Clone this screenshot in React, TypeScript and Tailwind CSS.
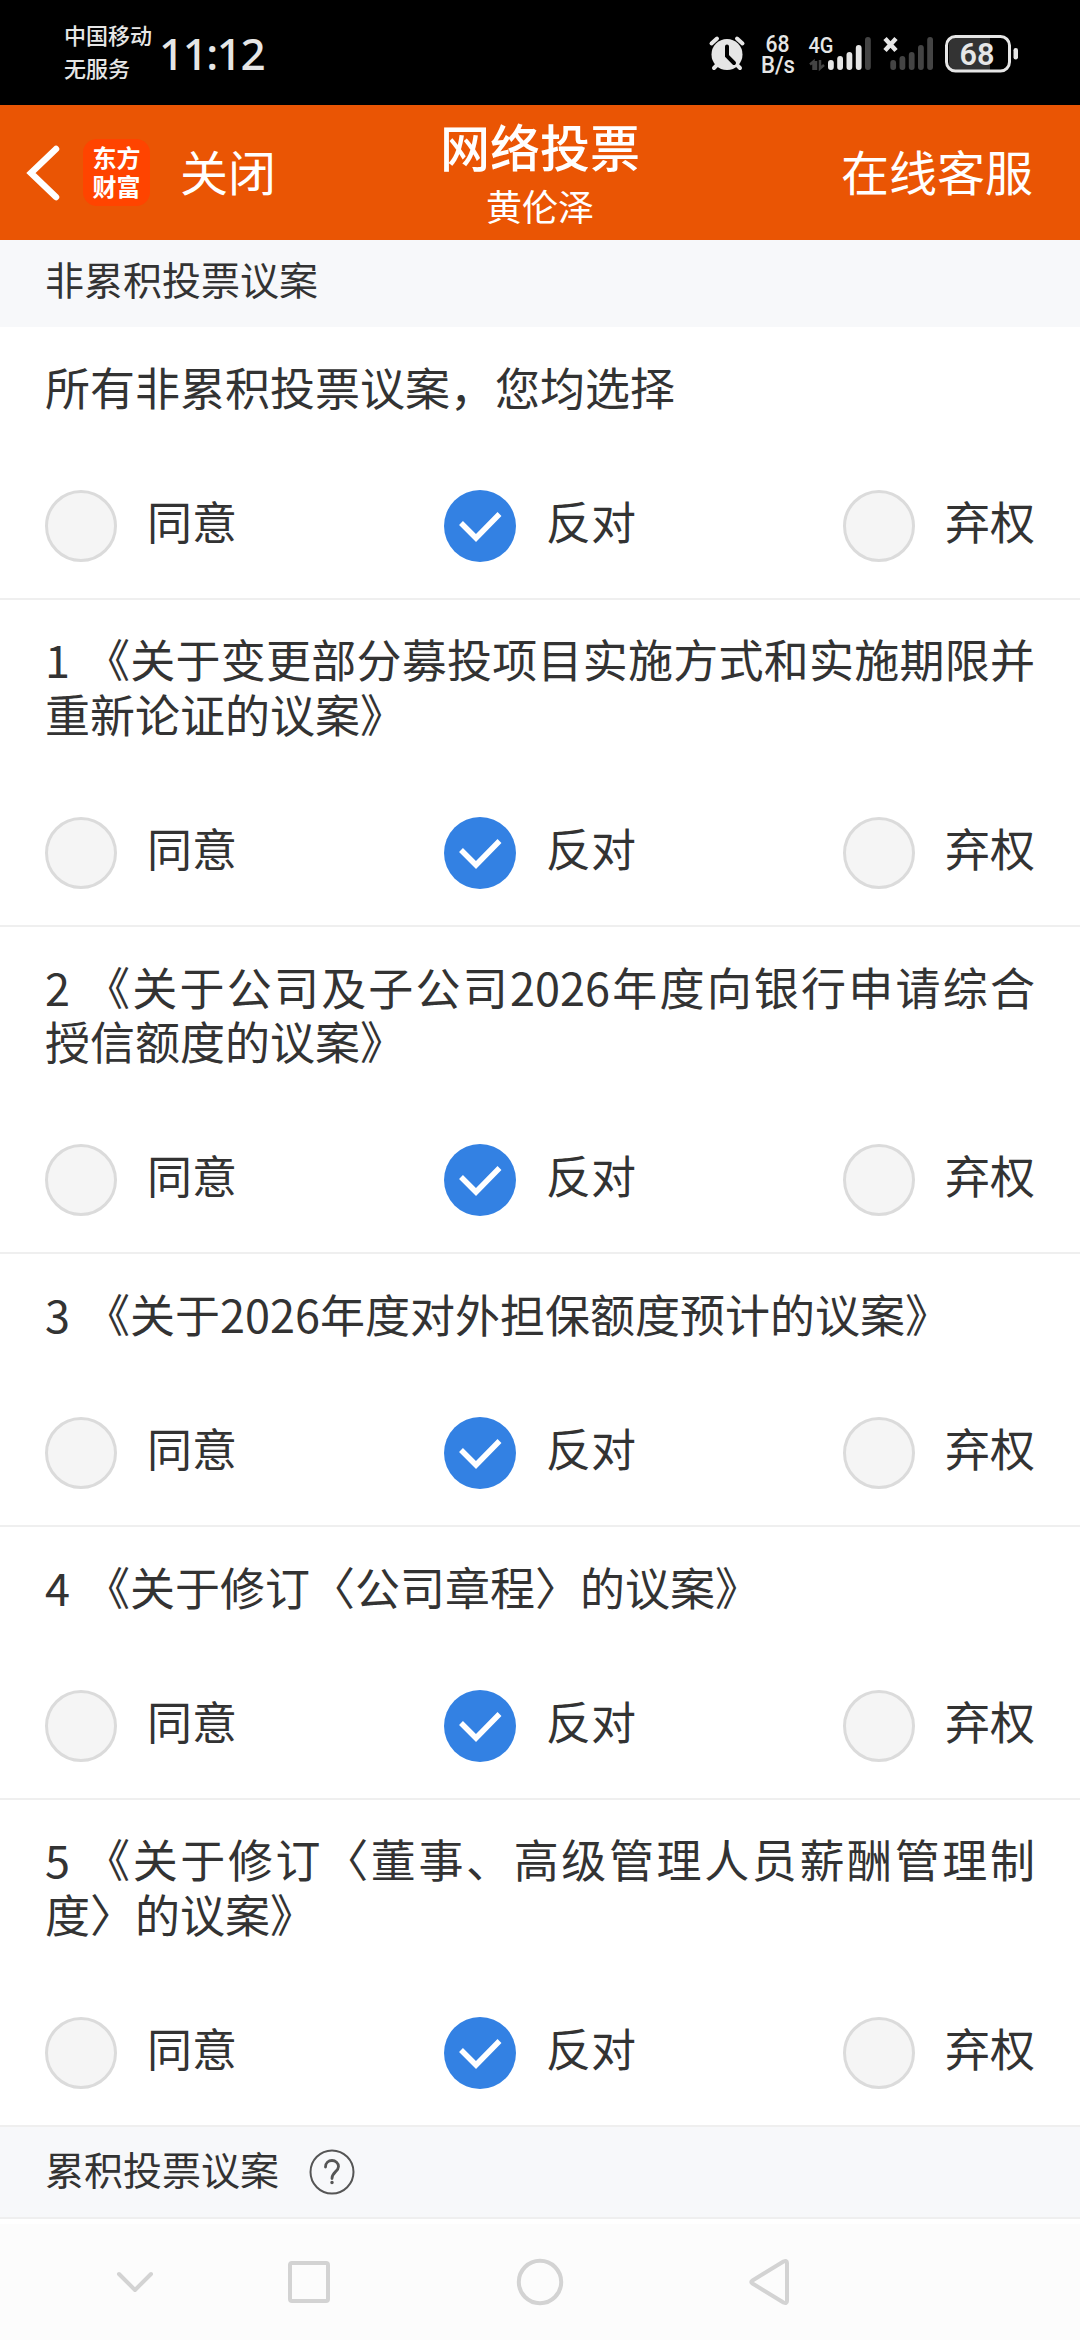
import { useState } from 'react';
import clsx from 'clsx';

type Choice = 'agree' | 'against' | 'abstain';

interface Proposal {
  id: string;
  no?: string;
  lines: string[];
}

const CHOICES: { value: Choice; label: string }[] = [
  { value: 'agree', label: '同意' },
  { value: 'against', label: '反对' },
  { value: 'abstain', label: '弃权' },
];

const PROPOSALS: Proposal[] = [
  { id: 'all', lines: ['所有非累积投票议案，您均选择'] },
  { id: 'p1', no: '1', lines: ['《关于变更部分募投项目实施方式和实施期限并', '重新论证的议案》'] },
  { id: 'p2', no: '2', lines: ['《关于公司及子公司2026年度向银行申请综合', '授信额度的议案》'] },
  { id: 'p3', no: '3', lines: ['《关于2026年度对外担保额度预计的议案》'] },
  { id: 'p4', no: '4', lines: ['《关于修订〈公司章程〉的议案》'] },
  { id: 'p5', no: '5', lines: ['《关于修订〈董事、高级管理人员薪酬管理制', '度〉的议案》'] },
];

function StatusBar() {
  return (
    <div className="flex h-[105px] items-start bg-black pl-[64px] text-[#e6e6e6]">
      <div className="w-[95px] pt-[18px] text-[22px] leading-[33px] font-medium whitespace-nowrap">
        <div>中国移动</div>
        <div>无服务</div>
      </div>
      <div className="pt-[23px] font-['Noto_Sans'] text-[44px] leading-[60px] font-medium tracking-[-1.500px] whitespace-nowrap">
        11:12
      </div>
      <svg className="ml-auto h-[105px] w-[380px] shrink-0" viewBox="700 0 380 105" fill="#e6e6e6">
        {/* alarm */}
        <circle cx="727" cy="54.5" r="15.5" />
        <path
          d="M711.500 43.500l5.500-5M742.500 43.500l-5.500-5M714 68l5-5M740 68l-5-5"
          stroke="#e6e6e6"
          strokeWidth="4"
          strokeLinecap="round"
        />
        <path d="M727 46.500v9.500l7 7" fill="none" stroke="#000" strokeWidth="4" strokeLinecap="round" />

        <g fontFamily="Roboto" fontWeight="500" textAnchor="middle">
          <text x="777.500" y="52" fontSize="24" textLength="24" lengthAdjust="spacingAndGlyphs">68</text>
          <text x="778" y="73" fontSize="23" textLength="34" lengthAdjust="spacingAndGlyphs">B/s</text>
          <text x="821" y="53" fontSize="22" textLength="25" lengthAdjust="spacingAndGlyphs">4G</text>
        </g>
        <path
          d="M810 64.500l3.500-3V70M820 60v8.500l4-3.500M816 61v9"
          fill="none"
          stroke="#444"
          strokeWidth="2.500"
        />
        {/* sim 1 */}
        <rect x="828" y="60" width="5.800" height="10" rx="2.900" />
        <rect x="837.200" y="56" width="5.800" height="14" rx="2.900" />
        <rect x="846.500" y="52" width="5.800" height="18" rx="2.900" />
        <rect x="855.800" y="45" width="5.800" height="25" rx="2.900" />
        <g fill="#444">
          <rect x="865" y="37" width="5.800" height="33" rx="2.900" />
          {/* sim 2 */}
          <rect x="890.300" y="60" width="5.800" height="10" rx="2.900" />
          <rect x="899.500" y="56" width="5.800" height="14" rx="2.900" />
          <rect x="908.800" y="52" width="5.800" height="18" rx="2.900" />
          <rect x="918" y="45" width="5.800" height="25" rx="2.900" />
          <rect x="927.200" y="37" width="5.800" height="33" rx="2.900" />
        </g>
        <path d="M885 38.500l11 12M896 38.500l-11 12" stroke="#e6e6e6" strokeWidth="4.500" />
        {/* battery */}
        <path d="M956 37.500h34v32.500h-34a7 7 0 0 1-7-7V44a7 7 0 0 1 7-6.500z" fill="#333" />
        <rect x="946.500" y="36.500" width="63" height="34.500" rx="9" fill="none" stroke="#e6e6e6" strokeWidth="3" />
        <rect x="1013.500" y="48" width="4.500" height="11.500" rx="2.200" />
        <text
          x="977"
          y="65"
          fontSize="32"
          fontWeight="600"
          fontFamily="Roboto"
          textAnchor="middle"
          textLength="35"
          lengthAdjust="spacingAndGlyphs"
        >
          68
        </text>
      </svg>
    </div>
  );
}

function Header() {
  return (
    <header className="grid h-[135px] grid-cols-[1fr_auto_1fr] items-center bg-[#ea5504] text-white">
      <div className="flex items-center">
        <svg className="ml-[25px] h-[60px] w-[36px]" viewBox="0 0 36 60" fill="none">
          <path d="M31 6L6 30l25 24" stroke="#fff" strokeWidth="6.500" strokeLinecap="round" strokeLinejoin="miter" />
        </svg>
        <div className="ml-[22px] flex h-[67px] w-[67px] flex-col items-center justify-center rounded-[14px] bg-[#ff4400] pb-[4px] font-['Noto_Sans_CJK_SC'] text-[24px] leading-[29px] font-bold">
          <span>东方</span>
          <span>财富</span>
        </div>
        <button className="ml-[30px] pb-[6px] text-[48px] leading-[60px]">关闭</button>
      </div>
      <div className="pb-[2px] text-center">
        <h1 className="text-[50px] leading-[64px] font-medium">网络投票</h1>
        <p className="mt-[3px] text-[36px] leading-[50px]">黄伦泽</p>
      </div>
      <button className="mr-[47px] justify-self-end pb-[6px] text-[48px] leading-[60px]">在线客服</button>
    </header>
  );
}

function Radio({ checked }: { checked: boolean }) {
  if (!checked) {
    return <span className="h-[72px] w-[72px] rounded-full border-[3px] border-[#dbdbdb] bg-[#f5f5f5]" />;
  }

  return (
    <span className="h-[72px] w-[72px] rounded-full bg-[#3381e3]">
      <svg viewBox="0 0 72 72" fill="none">
        <path d="M17 33l15 15 23.500-24" stroke="#fff" strokeWidth="5.500" />
      </svg>
    </span>
  );
}

interface ProposalRowProps {
  proposal: Proposal;
  value: Choice;
  onChange: (value: Choice) => void;
}

function ProposalRow({ proposal, value, onChange }: ProposalRowProps) {
  const { no, lines } = proposal;

  return (
    <section className="border-b-2 border-[#efefef] px-[45px] pt-[32.500px] pb-[35.800px]">
      <div className="mb-[76.100px] text-[45px] leading-[54.400px] whitespace-nowrap">
        {lines.map((line, i) => (
          <div key={line} className="flex">
            {no && i === 0 && <span className="w-[40px] shrink-0">{no}</span>}
            {/* every line but the last one is stretched to both edges */}
            <span className={clsx('flex-1', i < lines.length - 1 && '[text-align-last:justify]')}>{line}</span>
          </div>
        ))}
      </div>
      <div className="flex justify-between">
        {CHOICES.map((choice) => (
          <button key={choice.value} className="flex items-center gap-[30px]" onClick={() => onChange(choice.value)}>
            <Radio checked={value === choice.value} />
            <span className="pb-[10px] text-[45px] leading-[54px]">{choice.label}</span>
          </button>
        ))}
      </div>
    </section>
  );
}

function NavBar() {
  return (
    <nav className="h-[116px] bg-[#fcfcfc]">
      <svg
        className="h-[116px] w-full"
        viewBox="0 2224 1080 116"
        fill="none"
        stroke="#d3d3d3"
        strokeWidth="4"
        strokeLinecap="round"
        strokeLinejoin="round"
      >
        <path d="M119 2274l16 16 16-16" />
        <rect x="290" y="2263" width="38" height="38" rx="2" />
        <circle cx="540" cy="2282" r="21.200" />
        <path d="M783.500 2261.500l-31 19q-2.500 1.500 0 3l31 19q3.500 1.500 3.500-1.500v-38q0-3-3.500-1.500z" />
      </svg>
    </nav>
  );
}

export default function App() {
  const [votes, setVotes] = useState<Record<string, Choice>>({});

  return (
    <div className="flex h-[2340px] w-[1080px] flex-col overflow-hidden bg-white font-['Noto_Sans_CJK_SC',sans-serif] text-[#333]">
      <StatusBar />
      <Header />
      <main className="flex-1">
        <h2 className="h-[87px] bg-[#f7f8fa] px-[45px] pt-[9px] text-[39px] leading-[58px]">非累积投票议案</h2>
        {PROPOSALS.map((proposal) => (
          <ProposalRow
            key={proposal.id}
            proposal={proposal}
            value={votes[proposal.id] ?? 'against'}
            onChange={(value) => setVotes({ ...votes, [proposal.id]: value })}
          />
        ))}
        <h2 className="flex h-[92px] items-center border-b-2 border-[#efefef] bg-[#f7f8fa] px-[45px] text-[39px] leading-[58px]">
          <span className="pb-[8px]">累积投票议案</span>
          <svg className="ml-[30px] h-[46px] w-[46px]" viewBox="0 0 46 46" fill="none" stroke="#555" strokeLinecap="round">
            <circle cx="23" cy="23" r="21.500" strokeWidth="2" />
            <path d="M16.500 18c0-4 3-6.500 6.500-6.500s6.500 2.500 6.500 6c0 5-6.500 5.500-6.500 12" strokeWidth="2.800" />
            <circle cx="23" cy="33.500" r="1" fill="#555" strokeWidth="1.500" />
          </svg>
        </h2>
      </main>
      <NavBar />
    </div>
  );
}
